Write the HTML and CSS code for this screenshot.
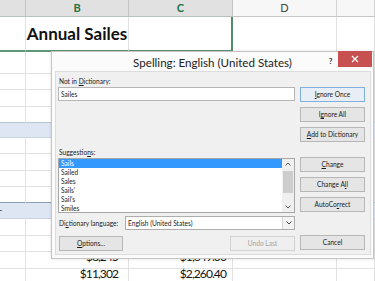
FILE: index.html
```html
<!DOCTYPE html>
<html>
<head>
<meta charset="utf-8">
<link rel="stylesheet" href="styles.css">
</head>
<body>
<div class="sheet">
  <div class="row hdr">
    <div class="hc sel"></div>
    <div class="hc sel">B</div>
    <div class="hc sel">C</div>
    <div class="hc">D</div>
    <div class="hc"></div>
  </div>
  <div class="row r1">
    <div class="c selb"></div>
    <div class="c selb ttl">Annual Sailes</div>
    <div class="c selb selr"></div>
    <div class="c"></div>
    <div class="c"></div>
  </div>
  <div class="row h22"><div class="c"></div><div class="c"></div><div class="c"></div><div class="c"></div><div class="c"></div></div>
  <div class="row h16"><div class="c"></div><div class="c"></div><div class="c"></div><div class="c"></div><div class="c"></div></div>
  <div class="row h17"><div class="c"></div><div class="c"></div><div class="c"></div><div class="c"></div><div class="c"></div></div>
  <div class="row h16 pre-band"><div class="c"></div><div class="c"></div><div class="c"></div><div class="c"></div><div class="c"></div></div>
  <div class="row h15 band"><div class="c"></div><div class="c"></div><div class="c"></div><div class="c"></div><div class="c"></div></div>
  <div class="row h16"><div class="c"></div><div class="c"></div><div class="c"></div><div class="c"></div><div class="c"></div></div>
  <div class="row h17"><div class="c"></div><div class="c"></div><div class="c"></div><div class="c"></div><div class="c"></div></div>
  <div class="row h16"><div class="c"></div><div class="c"></div><div class="c"></div><div class="c"></div><div class="c"></div></div>
  <div class="row h16 pre-band dark"><div class="c"></div><div class="c"></div><div class="c"></div><div class="c"></div><div class="c"></div></div>
  <div class="row h16 band"><div class="c tail">-</div><div class="c"></div><div class="c"></div><div class="c"></div><div class="c"></div></div>
  <div class="row h17"><div class="c"></div><div class="c"></div><div class="c"></div><div class="c"></div><div class="c"></div></div>
  <div class="row h16"><div class="c"></div><div class="c"></div><div class="c"></div><div class="c"></div><div class="c"></div></div>
  <div class="row h17"><div class="c"></div><div class="c num nb">$8,245</div><div class="c num nc">$1,649.00</div><div class="c"></div><div class="c"></div></div>
  <div class="row h17"><div class="c"></div><div class="c num nb">$11,302</div><div class="c num nc">$2,260.40</div><div class="c"></div><div class="c"></div></div>
</div>

<div class="dialog">
  <div class="titlebar">
    <div class="tspacer"></div>
    <div class="dtitle">Spelling: English (United States)</div>
    <div class="tctrls">
      <span class="help">?</span>
      <span class="close"><svg width="8" height="8" viewBox="0 0 8 8"><path d="M1 1L7 7M7 1L1 7" stroke="#fff" stroke-width="1.2"/></svg></span>
    </div>
  </div>
  <div class="panel">
    <div class="lcol">
      <div class="lbl first">Not in <u>D</u>ictionary:</div>
      <div class="input">Sailes</div>
      <div class="lbl sugg">Suggestio<u>n</u>s:</div>
      <div class="list">
        <div class="items">
          <div class="item on">Sails</div>
          <div class="item">Sailed</div>
          <div class="item">Sales</div>
          <div class="item">Sails'</div>
          <div class="item">Sail's</div>
          <div class="item">Smiles</div>
        </div>
        <div class="vscroll">
          <span class="arr"><svg width="6" height="4" viewBox="0 0 6 4"><path d="M0.5 3.5L3 1L5.5 3.5" fill="none" stroke="#555" stroke-width="1"/></svg></span>
          <span class="thumb"></span>
          <span class="arr dn"><svg width="6" height="4" viewBox="0 0 6 4"><path d="M0.5 0.5L3 3L5.5 0.5" fill="none" stroke="#555" stroke-width="1"/></svg></span>
        </div>
      </div>
      <div class="langrow">
        <span class="lbl">Di<u>c</u>tionary language:</span>
        <div class="combo">
          <span class="ctext">English (United States)</span>
          <span class="drop"><svg width="6" height="4" viewBox="0 0 6 4"><path d="M0.5 0.5L3 3L5.5 0.5" fill="none" stroke="#444" stroke-width="1"/></svg></span>
        </div>
      </div>
      <div class="brow">
        <div class="btn opt"><u>O</u>ptions...</div>
        <div class="btn dis">Undo Last</div>
      </div>
    </div>
    <div class="rcol">
      <div class="btn def first"><u>I</u>gnore Once</div>
      <div class="btn">I<u>g</u>nore All</div>
      <div class="btn"><u>A</u>dd to Dictionary</div>
      <div class="btn grp"><u>C</u>hange</div>
      <div class="btn">Change A<u>l</u>l</div>
      <div class="btn">AutoCo<u>r</u>rect</div>
      <div class="btn cancel">Cancel</div>
    </div>
  </div>
</div>
</body>
</html>
```

FILE: styles.css
```css
* { box-sizing: border-box; margin: 0; padding: 0; }
html, body { width: 375px; height: 281px; overflow: hidden; background: #fff; }
body { position: relative; font-family: Lato, "Open Sans", sans-serif; color: #000; }

/* spreadsheet */
.sheet { display: flex; flex-direction: column; }
.row { display: grid; grid-template-columns: 26px 103px 104px 104px 38px; flex: none; }
.c { border-right: 1px solid #e1e1e1; border-bottom: 1px solid #e1e1e1; overflow: hidden; white-space: nowrap; }
.hdr { height: 17px; }
.hc { background: #f7f7f7; border-right: 1px solid #d4d4d4; border-bottom: 1px solid #c6c6c6; font-size: 11px; line-height: 16px; text-align: center; color: #444; }
.hc.sel { background: #e1e1e1; color: #217346; font-weight: 700; border-right-color: #c3c3c3; border-bottom-color: #b9bfbb; }
.r1 { height: 35px; }
.selb { border-bottom: 2px solid #5f9677; }
.selr { border-right: 2px solid #4f8e69; }
.ttl { font-size: 17px; font-weight: 700; line-height: 33px; text-align: center; color: #111; }
.h15 { height: 15px; }
.h16 { height: 16px; }
.h17 { height: 17px; }
.h22 { height: 22px; }
.pre-band .c { border-bottom-color: #b9c4d4; }
.pre-band.dark .c { border-bottom-color: #8f9db3; }
.band .c { background: #dde6f2; border-right-color: #dde6f2; border-bottom-color: #c8d2e0; }
.tail { font-size: 9px; line-height: 14px; color: #333; text-indent: -1px; }
.num { overflow: visible; font-size: 12px; line-height: 14px; padding-top: 0; margin-top: -2px; letter-spacing: -0.9px; text-align: right; color: #111; }
.nb { padding-right: 10px; }
.nc { padding-right: 6px; }

/* dialog */
.dialog { position: absolute; left: 51px; top: 51px; width: 323px; height: 208px; background: #fbfbfb; border: 1px solid #c4c4c4; box-shadow: 0 0 3px rgba(0,0,0,0.12); display: flex; flex-direction: column; }
.titlebar { height: 19px; display: grid; grid-template-columns: 50px 1fr 50px; flex: none; }
.dtitle { font-size: 11.6px; line-height: 21px; text-align: center; color: #222; white-space: nowrap; }
.tctrls { display: flex; align-items: flex-start; }
.help { width: 15px; font-size: 8px; font-weight: 700; line-height: 16px; text-align: center; color: #333; margin-top: 1px; }
.close { width: 34px; height: 16px; margin-top: -1px; background: #c75050; display: flex; align-items: center; justify-content: center; }
.panel { flex: none; height: 184px; margin: 0 2px 0 3px; background: #f0f0f0; border: 1px solid #dcdcdc; display: flex; padding-left: 2px; font-size: 6.6px; color: #1a1a1a; }
.lcol { width: 237px; display: flex; flex-direction: column; }
.rcol { width: 65px; margin-left: 5px; display: flex; flex-direction: column; }
.lbl { line-height: 10px; height: 10px; padding-left: 1px; white-space: nowrap; }
.lbl.first { margin-top: 4px; }
.lbl.sugg { margin-top: 46px; }
.input { margin-top: 1px; height: 14px; background: #fff; border: 1px solid #b5b5b5; line-height: 12px; padding-left: 2px; }
.list { margin-top: 1px; height: 55px; background: #fff; border: 1px solid #a7a7a7; display: flex; }
.items { flex: 1; }
.item { height: 9px; line-height: 9px; padding-left: 2px; }
.item.on { background: #3399ff; color: #fff; }
.vscroll { width: 12px; background: #f0f0f0; display: flex; flex-direction: column; align-items: center; }
.arr { height: 10px; display: flex; align-items: center; justify-content: center; }
.thumb { width: 10px; height: 22px; margin-top: 2px; background: #cdcdcd; }
.arr.dn { margin-top: auto; }
.langrow { margin-top: 3px; height: 14px; display: flex; align-items: center; justify-content: space-between; }
.combo { width: 170px; height: 14px; background: #fff; border: 1px solid #adadad; display: flex; align-items: center; }
.ctext { flex: 1; padding-left: 2px; line-height: 12px; }
.drop { width: 12px; height: 12px; border-left: 1px solid #d6d6d6; background: #f3f3f3; display: flex; align-items: center; justify-content: center; }
.brow { margin-top: 6px; display: flex; justify-content: space-between; }
.btn { height: 15px; line-height: 13px; text-align: center; background: #e5e5e5; border: 1px solid #b7b7b7; white-space: nowrap; }
.btn + .btn { margin-top: 5px; }
.brow .btn + .btn { margin-top: 0; }
.btn.opt { width: 64px; margin-left: 1px; }
.btn.dis { width: 65px; color: #a3a3a3; background: #efefef; border-color: #d2d2d2; }
.btn.def { border-color: #7fb0e0; background: #e8eef5; }
.btn.first { margin-top: 15px; }
.btn.grp { margin-top: 15px; }
.btn.cancel { margin-top: 23px; }
u { text-decoration-thickness: 0.5px; text-underline-offset: 1px; }
```
